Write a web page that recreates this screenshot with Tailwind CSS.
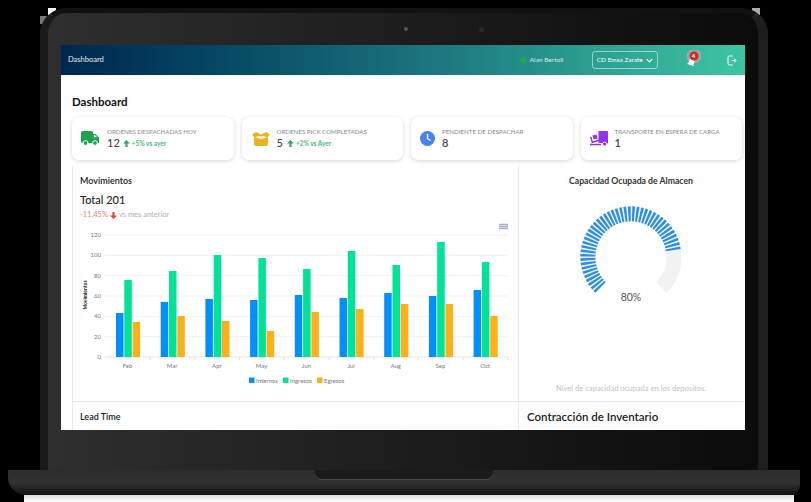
<!DOCTYPE html>
<html lang="en">
<head>
  <meta charset="UTF-8" />
  <title>Dashboard</title>
  <script src="https://cdn.jsdelivr.net/npm/@tailwindcss/browser@4"></script>
</head>
<body class="relative w-[811px] h-[502px] overflow-hidden bg-black pt-[8px] font-['Lato','Noto_Sans',sans-serif]">

  <!-- png edge artefacts -->
  <span class="absolute left-[48px] top-[8px] w-[8px] h-[8px] bg-white"></span>
  <span class="absolute left-[40px] top-[16px] w-[8px] h-[8px] bg-[#777]"></span>
  <span class="absolute left-[752px] top-[8px] w-[8px] h-[8px] bg-[#aaa]"></span>

  <!-- Lid -->
  <div class="ml-[40px] w-[728px] h-[462px] rounded-t-[26px] border-l-[8px] border-r-[10px] border-t-[5px] border-l-[#1a1a1a] border-r-[#1e1e1e] border-t-[#121212] bg-gradient-to-r from-[#2f2f2f] via-[#1d1d1d] to-[#0b0b0b] pl-[13px] pt-[32px] relative">
    <span class="absolute left-[356px] top-[14px] w-[4px] h-[4px] rounded-full bg-[#555]"></span>
    <span class="absolute left-[431px] top-[14px] w-[5px] h-[5px] rounded-full bg-[#2a2a2a]"></span>

    <!-- Screen -->
    <div class="w-[684px] h-[385px] bg-white overflow-hidden">

      <!-- Header -->
      <header class="h-[30px] flex items-center bg-gradient-to-r from-[#00274f] via-[#1a6f7a] to-[#3cc6a2] text-white">
        <span class="ml-[7px] text-[7.5px] text-white/90">Dashboard</span>
        <span class="ml-[416px] w-[6px] h-[6px] rounded-full bg-[#22a84a]"></span>
        <span class="ml-[4px] text-[6.5px] text-white/80 w-[62px]">Alan Bertoli</span>
        <div class="w-[66px] h-[18px] flex items-center justify-between px-[4px] border border-white/50 rounded-[3px] text-[6.5px]">
          CD Emsa Zarate
          <svg viewBox="0 0 10 6" class="w-[7px] h-[5px]" fill="none" stroke="white" stroke-width="1.8"><path d="M1 1l4 4 4-4"/></svg>
        </div>
        <!-- bell -->
        <div class="relative ml-[26px] w-[18px] h-[18px] -mt-[3px]">
          <svg viewBox="0 0 18 18" class="w-[18px] h-[18px]">
            <circle cx="10" cy="6" r="7.500" fill="#a8a8a8" fill-opacity=".85"/>
            <path d="M3 14c2-1 2.500-4 3-6l5 3c-1 1-2 3-1 5z" fill="white"/>
            <circle cx="10" cy="6" r="4.500" fill="#d42a2a"/>
          </svg>
          <span class="absolute left-[8px] top-[2.5px] text-[6px] leading-[7px] font-bold text-white">4</span>
        </div>
        <svg viewBox="0 0 10 11" class="ml-[25px] w-[10px] h-[11px]" fill="none" stroke="white" stroke-width="1"><path d="M5.500 1H2.500A1.500 1.500 0 0 0 1 2.500v6A1.500 1.500 0 0 0 2.500 10h3M4.500 5.500h4M7 3.500l2 2-2 2"/></svg>
      </header>

      <main class="pl-[11px] pr-[3px]">
        <h1 class="mt-[20px] h-[14px] leading-[14px] text-[11.5px] font-bold text-[#111]">Dashboard</h1>

        <!-- Cards -->
        <div class="mt-[8px] grid grid-cols-4 gap-[8px]">
          <div class="h-[43px] rounded-[7px] bg-white shadow-[0_1px_4px_rgba(0,0,0,.16)] flex items-center pl-[9px]">
            <svg viewBox="0 0 18 15" class="w-[18px] h-[15px] shrink-0" fill="#1fa34a"><path d="M1.500 0h9A1.500 1.500 0 0 1 12 1.500V3h2.500L18 6.500V12H1.500A1.500 1.500 0 0 1 0 10.500v-9A1.500 1.500 0 0 1 1.500 0z"/><path d="M12.800 4.200h1.300l2 2.100h-3.300z" fill="#fff"/><circle cx="4.500" cy="12" r="2.400" stroke="#fff"/><circle cx="14" cy="12" r="2.400" stroke="#fff"/></svg>
            <div class="ml-[8px]">
              <p class="text-[6.2px] leading-[9px] text-[#8a8a8a] whitespace-nowrap">ORDENES DESPACHADAS HOY</p>
              <div class="mt-[1px] flex items-center h-[14px]">
                <span class="text-[11px] font-medium text-[#444]">12</span>
                <svg viewBox="0 0 8 8" class="ml-[3px] w-[7px] h-[7px]" fill="#2aa866"><path d="M4 0l4 4H5.200v4H2.800V4H0z"/></svg>
                <span class="ml-[2px] text-[6.5px] font-bold text-[#4cba78]">+5% vs ayer</span>
              </div>
            </div>
          </div>
          <div class="h-[43px] rounded-[7px] bg-white shadow-[0_1px_4px_rgba(0,0,0,.16)] flex items-center pl-[10px]">
            <svg viewBox="0 0 18 14" class="w-[18px] h-[14px] shrink-0" fill="#eab322"><path d="M2 5l7 2 7-2v7a2 2 0 0 1-2 2H4a2 2 0 0 1-2-2z"/><path d="M0 2.500L4 0l5 2.500L14 0l4 2.500-2.500 3L10 3.800 9 5 8 3.800 2.500 5.500z"/></svg>
            <div class="ml-[7px]">
              <p class="text-[6.2px] leading-[9px] text-[#8a8a8a] whitespace-nowrap">ORDENES PICK COMPLETADAS</p>
              <div class="mt-[1px] flex items-center h-[14px]">
                <span class="text-[11px] font-medium text-[#444]">5</span>
                <svg viewBox="0 0 8 8" class="ml-[4px] w-[7px] h-[7px]" fill="#2aa866"><path d="M4 0l4 4H5.200v4H2.800V4H0z"/></svg>
                <span class="ml-[2px] text-[6.5px] font-bold text-[#4cba78]">+2% vs Ayer</span>
              </div>
            </div>
          </div>
          <div class="h-[43px] rounded-[7px] bg-white shadow-[0_1px_4px_rgba(0,0,0,.16)] flex items-center pl-[9px]">
            <svg viewBox="0 0 15 15" class="w-[15px] h-[15px] shrink-0"><circle cx="7.500" cy="7.500" r="7.500" fill="#4a82ee"/><path d="M7.500 3.500v4l2.500 1.800" fill="none" stroke="#fff" stroke-width="1.400" stroke-linecap="round"/></svg>
            <div class="ml-[7px]">
              <p class="text-[6.2px] leading-[9px] text-[#8a8a8a] whitespace-nowrap">PENDIENTE DE DESPACHAR</p>
              <div class="mt-[1px] flex items-center h-[14px]">
                <span class="text-[11px] font-semibold text-[#444]">8</span>
              </div>
            </div>
          </div>
          <div class="h-[43px] rounded-[7px] bg-white shadow-[0_1px_4px_rgba(0,0,0,.16)] flex items-center pl-[9px]">
            <svg viewBox="0 0 18 15" class="w-[18px] h-[15px] shrink-0" fill="#9333ea"><path d="M8.500 0H17a1 1 0 0 1 1 1v11.500h-1.200a2.200 2.200 0 0 0-4.200-.5H8.500z"/><circle cx="14.600" cy="13" r="1.600"/><path d="M2.500 4.500l4-1 1.200 4-4 1z"/><path d="M0 6h1.500l1.200 4.300 7-2 .4 1.500-8.400 2.400-1-4.700H0z"/><rect x="0" y="12.800" width="11" height="1.500"/></svg>
            <div class="ml-[7px]">
              <p class="text-[6.2px] leading-[9px] text-[#8a8a8a] whitespace-nowrap">TRANSPORTE EN ESPERA DE CARGA</p>
              <div class="mt-[1px] flex items-center h-[14px]">
                <span class="text-[11px] font-semibold text-[#444]">1</span>
              </div>
            </div>
          </div>
        </div>

        <!-- Panels -->
        <div class="mt-[6px] grid grid-cols-[446px_225px] grid-rows-[236px_40px]">
          <section class="border-l border-b border-[#e6e8ec] pl-[7px] pt-[9px] relative">
            <h2 class="h-[12px] leading-[12px] text-[9px] font-semibold text-[#222]">Movimientos</h2>
            <p class="mt-[6px] h-[14px] leading-[14px] text-[11px] font-medium text-[#222]">Total 201</p>
            <p class="mt-[3px] h-[10px] leading-[10px] text-[7.5px] flex items-center text-[#aab0b8]">
              <span class="text-[#ee7f7f]">-11.45%</span>
              <svg viewBox="0 0 8 8" class="mx-[2px] w-[7px] h-[7px]" fill="#e53e3e"><path d="M4 8L0 4h2.800V0h2.400v4H8z"/></svg>
              vs mes anterior
            </p>
            <svg id="chart" viewBox="72 222 446 166" class="absolute left-0 top-[56px] w-[446px] h-[166px]"></svg>
          </section>
          <section class="border-l border-b border-[#e6e8ec] relative text-center">
            <h2 class="mt-[9px] h-[12px] leading-[12px] text-[8.7px] font-bold text-[#333]">Capacidad Ocupada de Almacen</h2>
            <svg viewBox="0 0 120 110" class="absolute left-[52px] top-[38px] w-[120px] h-[110px]">
              <path d="M29.600 83.400A43 43 0 1 1 90.400 83.400" fill="none" stroke="#f2f2f2" stroke-width="15"/>
              <path d="M29.600 83.400A43 43 0 1 1 102.500 47.300" fill="none" stroke="#2b8fe2" stroke-width="15" stroke-dasharray="2.300 1.500"/>
              <text x="60" y="97" text-anchor="middle" font-size="10.5" fill="#555">80%</text>
            </svg>
            <p class="absolute left-0 right-0 top-[217px] text-[7.6px] leading-[10px] text-[#c0c2c8]">Nivel de capacidad ocupada en los depositos.</p>
          </section>
          <section class="border-l border-[#e6e8ec] pl-[7px] pt-[9px]">
            <h2 class="h-[12px] leading-[12px] text-[9px] font-semibold text-[#222]">Lead Time</h2>
          </section>
          <section class="border-l border-[#e6e8ec] pl-[8px] pt-[8px]">
            <h2 class="h-[14px] leading-[14px] text-[11.500px] font-semibold text-[#222]">Contracción de Inventario</h2>
          </section>
        </div>
      </main>
    </div>
  </div>

  <!-- Base -->
  <div class="relative ml-[8px] w-[792px] h-[25px] rounded-bl-[18px] rounded-br-[10px] bg-gradient-to-b from-[#2c2c2c] via-[#333] to-[#111]">
    <div class="absolute left-[307px] top-0 w-[178px] h-[10px] rounded-b-[7px] bg-[#1b1b1b] border-b border-[#4a4a4a]"></div>
  </div>
  <div class="ml-[24px] w-[770px] h-[7px] bg-gradient-to-b from-[#ddd] to-white"></div>

<script>
  // apex style grouped bars
  const months = ["Feb","Mar","Apr","May","Jun","Jul","Aug","Sep","Oct"];
  const internos = [44,55,58,57,62,59,64,61,67];
  const ingresos = [77,86,102,99,88,106,92,115,95];
  const egresos = [35,41,36,26,45,48,53,53,41];
  const base = 357, left = 104.5, step = 44.7;
  let out = "";

  [120,100,80,60,40,20,0].forEach((v, i) => {
    const y = 235 + i * 20.33;
    out += `<line x1="104" x2="507" y1="${y}" y2="${y}" stroke="${i == 6 ? '#e0e3e8' : '#eff1f3'}" stroke-width="1"/>`;
    out += `<text x="100" y="${y + 2}" text-anchor="end" font-size="6" fill="#777">${v}</text>`;
  });

  months.forEach((m, i) => {
    const x = left + step * i + 10.500;
    [[internos, "#008ffb"], [ingresos, "#00e396"], [egresos, "#feb019"]].forEach(([data, color], j) => {
      out += `<rect x="${x + j * 8.300}" y="${base - data[i]}" width="7.500" height="${data[i]}" fill="${color}"/>`;
    });
    out += `<text x="${x + 11.500}" y="368" text-anchor="middle" font-size="6" fill="#777">${m}</text>`;
    out += `<line x1="${left + step * (i + 1)}" x2="${left + step * (i + 1)}" y1="357" y2="360" stroke="#e0e3e8"/>`;
  });

  out += `<text transform="translate(85.500 295) rotate(-90)" text-anchor="middle" font-size="5" font-weight="700" fill="#222">Movimientos</text>`;
  out += `<path d="M498 224.500h9M498 226.500h9M498 228.500h9" stroke="#aab2c0" stroke-width="1.400"/>`;

  [[248, "Internos", "#008ffb"], [282, "Ingresos", "#00e396"], [316, "Egresos", "#feb019"]].forEach(([x, label, color]) => {
    out += `<rect x="${x}" y="377.500" width="5.500" height="5.500" fill="${color}"/>`;
    out += `<text x="${x + 7}" y="382.500" font-size="6" fill="#777">${label}</text>`;
  });

  document.getElementById("chart").innerHTML = out;
</script>
</body>
</html>
